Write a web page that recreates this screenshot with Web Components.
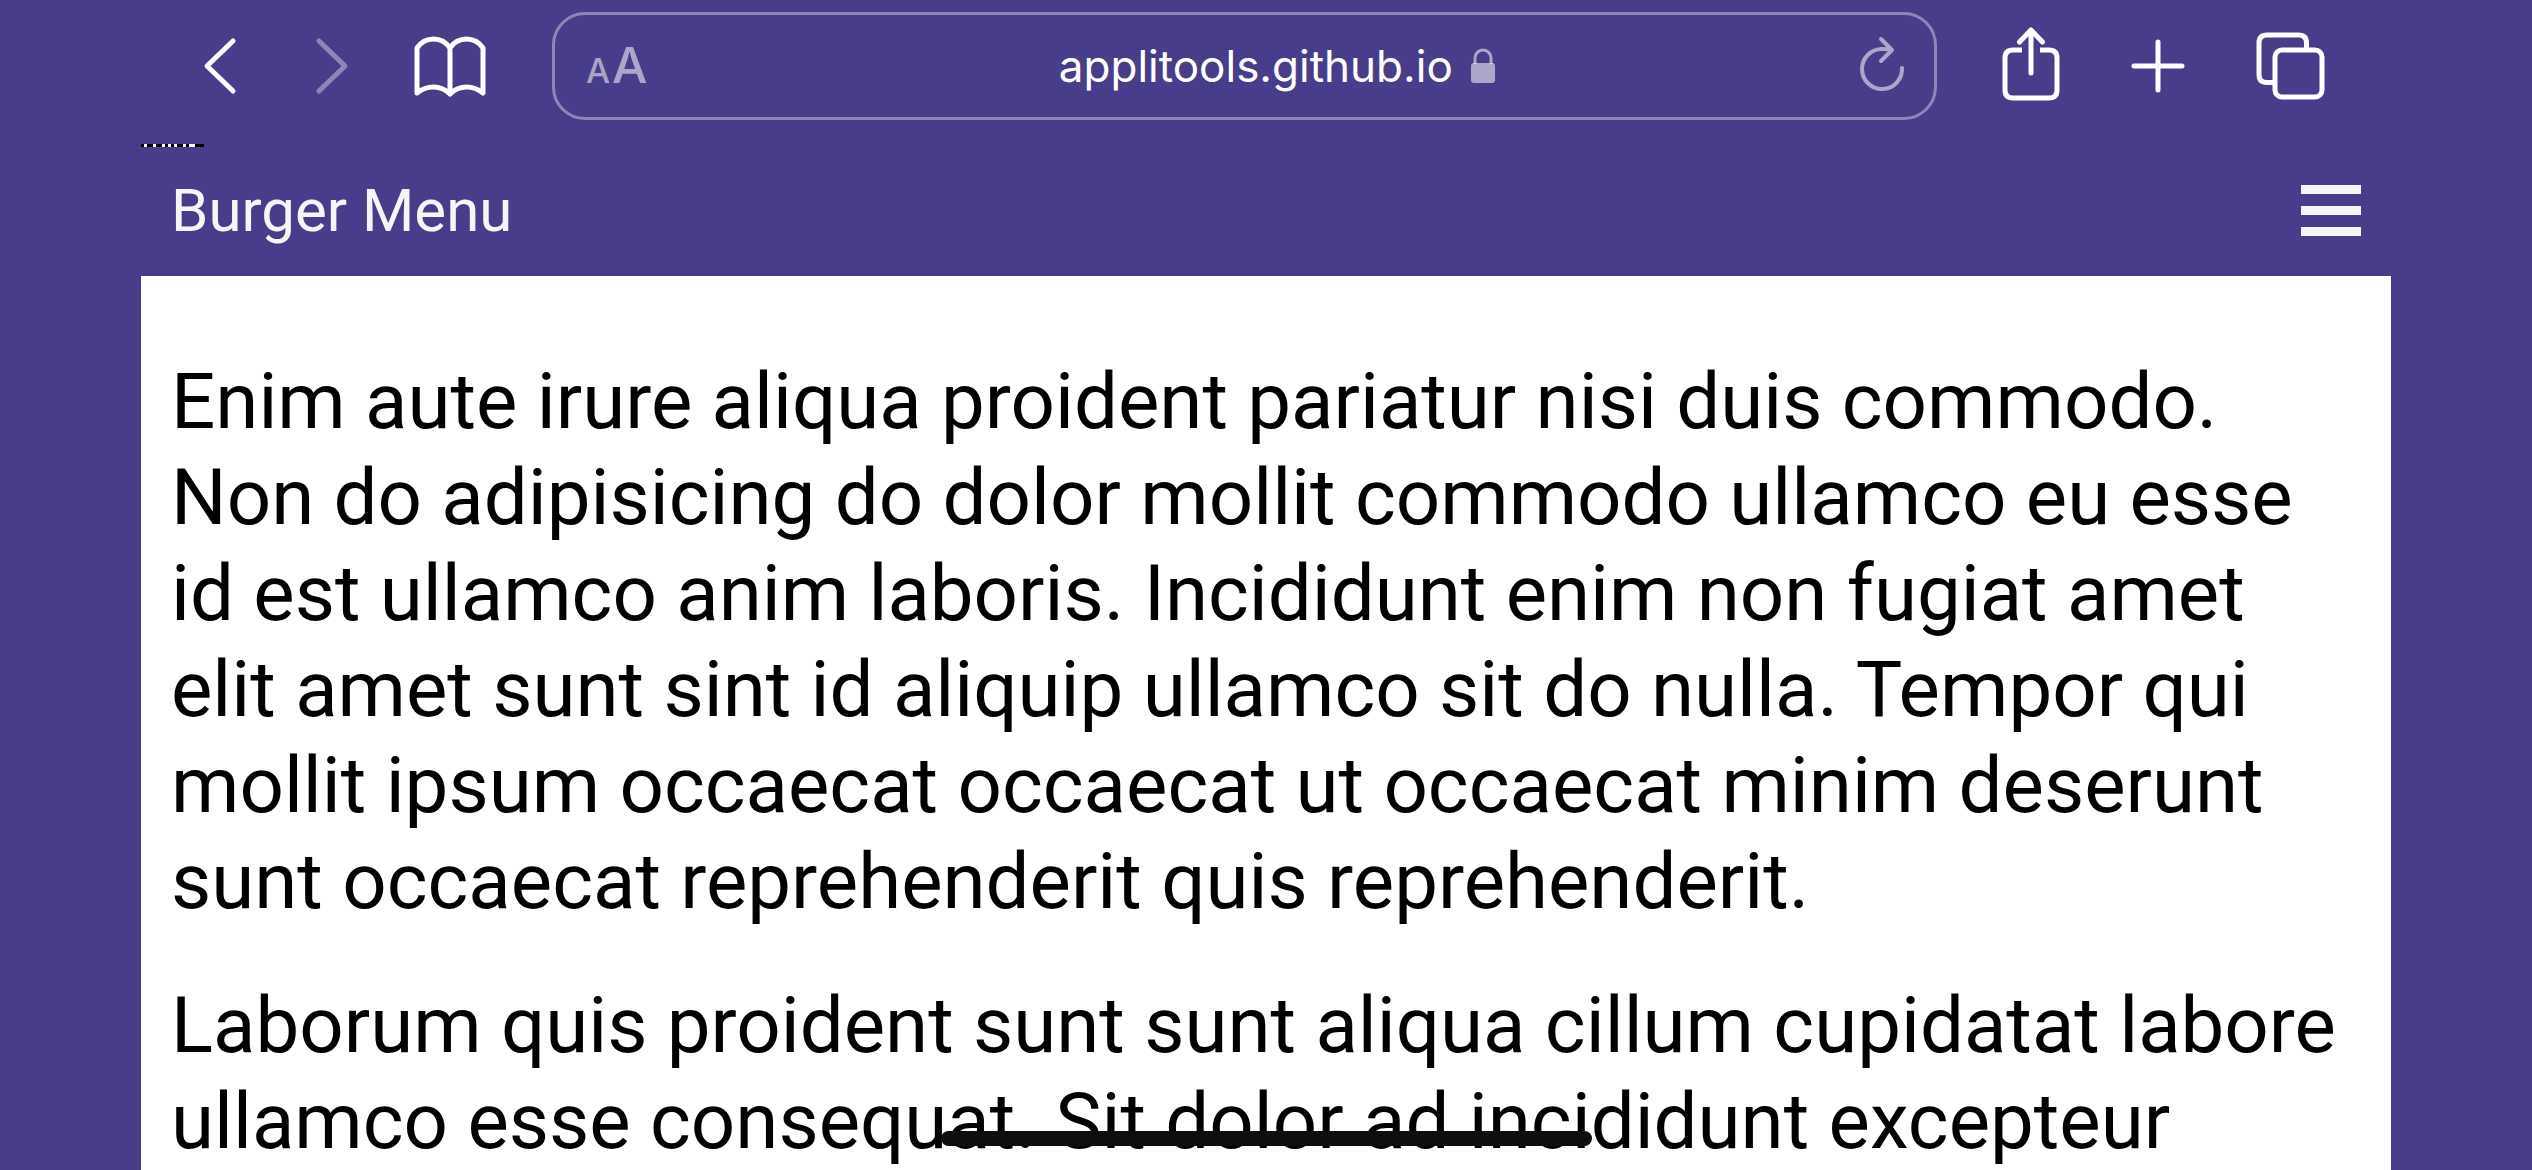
<!DOCTYPE html>
<html lang="en">
<head>
<meta charset="utf-8">
<meta name="viewport" content="width=device-width, initial-scale=1">
<title>Burger Menu</title>
<style>
  html, body { margin: 0; height: 100%; }
  body { background: #483d8b; font-family: Roboto, sans-serif; overflow: hidden; }
</style>
</head>
<body>
<phone-screen>
  <browser-bar slot="bar" address="applitools.github.io"></browser-bar>
  <page-header slot="page">Burger Menu</page-header>
  <page-content slot="page">
    <p>Enim aute irure aliqua proident pariatur nisi duis commodo. Non do adipisicing do dolor mollit commodo ullamco eu esse id est ullamco anim laboris. Incididunt enim non fugiat amet elit amet sunt sint id aliquip ullamco sit do nulla. Tempor qui mollit ipsum occaecat occaecat ut occaecat minim deserunt sunt occaecat reprehenderit quis reprehenderit.</p>
    <p>Laborum quis proident sunt sunt aliqua cillum cupidatat labore ullamco esse consequat. Sit dolor ad incididunt excepteur</p>
  </page-content>
</phone-screen>

<script>
const define = (name, html, setup) => customElements.define(name, class extends HTMLElement {
  constructor() {
    super();
    this.attachShadow({ mode: 'open' }).innerHTML = html;
  }
  connectedCallback() { if (setup) setup(this, this.shadowRoot); }
});

const ICONS = {
  back: '<path d="M53 17 27 42l26 25"/>',
  forward: '<path d="M24 17l26 25-26 25"/>',
  book: '<path d="M40 24v46M40 24C36 18 30 15 23.500 15S11 18 7 24v45c5-4 10-6 16.500-6S36 66 40 70c4-4 10-7 16.500-7S68 65 73 69V24c-4-6-10-9-16.500-9S44 18 40 24"/>',
  share: '<path d="M31 26H22q-8 0-8 8v32q0 8 8 8h36q8 0 8-8V34q0-8-8-8h-9" stroke-linecap="butt"/><path d="M40 49V6M28.500 18 40 6l11.500 12"/>',
  plus: '<path d="M37 18v48M13 42h48"/>',
  tabs: '<rect x="24" y="26" width="47" height="47" rx="7"/><path d="M24 58.500h-8q-8 0-8-8V19q0-8 8-8h31.500q8 0 8 8v7" stroke-linecap="butt"/>'
};

define('tool-button', `
  <style>
    :host { display: block; flex: none; color: #fff; }
    :host([dim]) { color: rgb(255 255 255 / .38); }
    button { display: block; width: 80px; height: 84px; padding: 0; border: 0; background: none; color: inherit; }
    svg { display: block; width: 80px; height: 84px; fill: none; stroke: currentColor; stroke-width: 5; stroke-linecap: round; stroke-linejoin: round; }
  </style>
  <button type="button"><svg viewBox="0 0 80 84" aria-hidden="true"></svg></button>`,
  (el, root) => {
    root.querySelector('svg').innerHTML = ICONS[el.getAttribute('icon')];
    const button = root.querySelector('button');
    button.setAttribute('aria-label', el.getAttribute('label'));
    button.disabled = el.hasAttribute('dim');
  });

define('address-field', `
  <style>
    :host { display: flex; flex: 1; align-items: center; box-sizing: border-box; height: 108px; padding: 0 28px 0 31px;
      border: 3px solid rgb(255 255 255 / .38); border-radius: 33px; color: rgb(255 255 255 / .55); font-family: Inter, sans-serif; }
    button { flex: none; padding: 0; border: 0; background: none; color: inherit; font: inherit; }
    .size { display: flex; align-items: baseline; gap: 2px; padding-top: 4px; line-height: 60px; font-weight: 500; }
    .small { font-size: 34px; }
    .large { font-size: 50px; }
    .site { display: flex; flex: 1; align-items: center; justify-content: center; gap: 18px; padding-left: 48px; }
    input { width: 394px; height: 60px; padding: 0; border: 0; background: none; color: #fff; font: 44px/60px Inter, sans-serif; text-align: right; outline: 0; }
    svg { display: block; }
  </style>
  <button class="size" type="button" aria-label="Page settings"><span class="small">A</span><span class="large">A</span></button>
  <div class="site">
    <input type="text" aria-label="Address" spellcheck="false">
    <svg width="24" height="36" viewBox="0 0 24 36" fill="none" aria-hidden="true"><rect y="15" width="24" height="20" rx="3" fill="currentColor"/><path d="M4 16V10a8 8 0 0 1 16 0v6" stroke="currentColor" stroke-width="3"/></svg>
  </div>
  <button type="button" aria-label="Reload"><svg width="48" height="60" viewBox="0 0 48 60" fill="none" stroke="currentColor" stroke-width="4" stroke-linecap="round" stroke-linejoin="round" aria-hidden="true"><path d="M44 32A20 20 0 1 1 24 13q5 0 10 1M23 3l11 11-11 11"/></svg></button>`,
  (el, root) => { root.querySelector('input').value = el.getAttribute('value'); });

define('browser-bar', `
  <style>
    :host { display: flex; align-items: center; box-sizing: border-box; height: 144px; padding: 0 201px 12px 180px; }
    nav { display: flex; gap: 35px; }
    address-field { margin: 0 54px 0 62px; }
    .actions { gap: 50px; }
  </style>
  <nav>
    <tool-button icon="back" label="Back"></tool-button>
    <tool-button icon="forward" label="Forward" dim></tool-button>
    <tool-button icon="book" label="Bookmarks"></tool-button>
  </nav>
  <address-field></address-field>
  <nav class="actions">
    <tool-button icon="share" label="Share"></tool-button>
    <tool-button icon="plus" label="New tab"></tool-button>
    <tool-button icon="tabs" label="Tabs"></tool-button>
  </nav>`,
  (el, root) => {
    const field = root.querySelector('address-field');
    field.setAttribute('value', el.getAttribute('address'));
    field.shadowRoot.querySelector('input').value = el.getAttribute('address');
  });

define('page-header', `
  <style>
    :host { display: block; color: #f5f5f5; }
    .strip { display: block; }
    header { display: flex; align-items: center; justify-content: space-between; box-sizing: border-box; height: 129px; padding: 0 30px 2px; }
    h1 { margin: 0; font-size: 60px; line-height: 72px; font-weight: 400; }
    button { display: flex; flex-direction: column; gap: 12px; width: 60px; padding: 0; border: 0; background: none; }
    i { display: block; width: 100%; height: 9px; background: #f5f5f5; }
  </style>
  <svg class="strip" width="63" height="3" viewBox="0 0 21 1" shape-rendering="crispEdges" aria-hidden="true"><path d="M0 0h21v1H0z"/><path fill="#fff" d="M1 0h1v1H1zM4 0h1v1H4zM7 0h1v1H7zM9 0h1v1H9zM11 0h1v1h-1zM14 0h1v1h-1zM16 0h2v1h-2z"/></svg>
  <header>
    <h1><slot></slot></h1>
    <button type="button" aria-label="Menu"><i></i><i></i><i></i></button>
  </header>`);

define('page-content', `
  <style>
    :host { display: block; flex: 1; padding: 30px; background: #fff; color: #000; font-size: 78px; line-height: 96px; }
    ::slotted(p) { margin: 48px 0 !important; }
    main { display: flow-root; }
    ::slotted(p + p) { margin-top: 0 !important; }
  </style>
  <main><slot></slot></main>`);

define('home-indicator', `
  <style>
    :host { display: block; position: fixed; left: 50%; bottom: 24px; width: 651px; height: 15px; margin-left: -325px; border-radius: 8px; background: #0e0e0e; }
  </style>`);

define('phone-screen', `
  <style>
    :host { display: flex; flex-direction: column; height: 100vh; overflow: hidden; }
    .page { display: flex; flex: 1; flex-direction: column; min-height: 0; margin: 0 141px; }
  </style>
  <slot name="bar"></slot>
  <div class="page"><slot name="page"></slot></div>
  <home-indicator></home-indicator>`);
</script>
</body>
</html>
